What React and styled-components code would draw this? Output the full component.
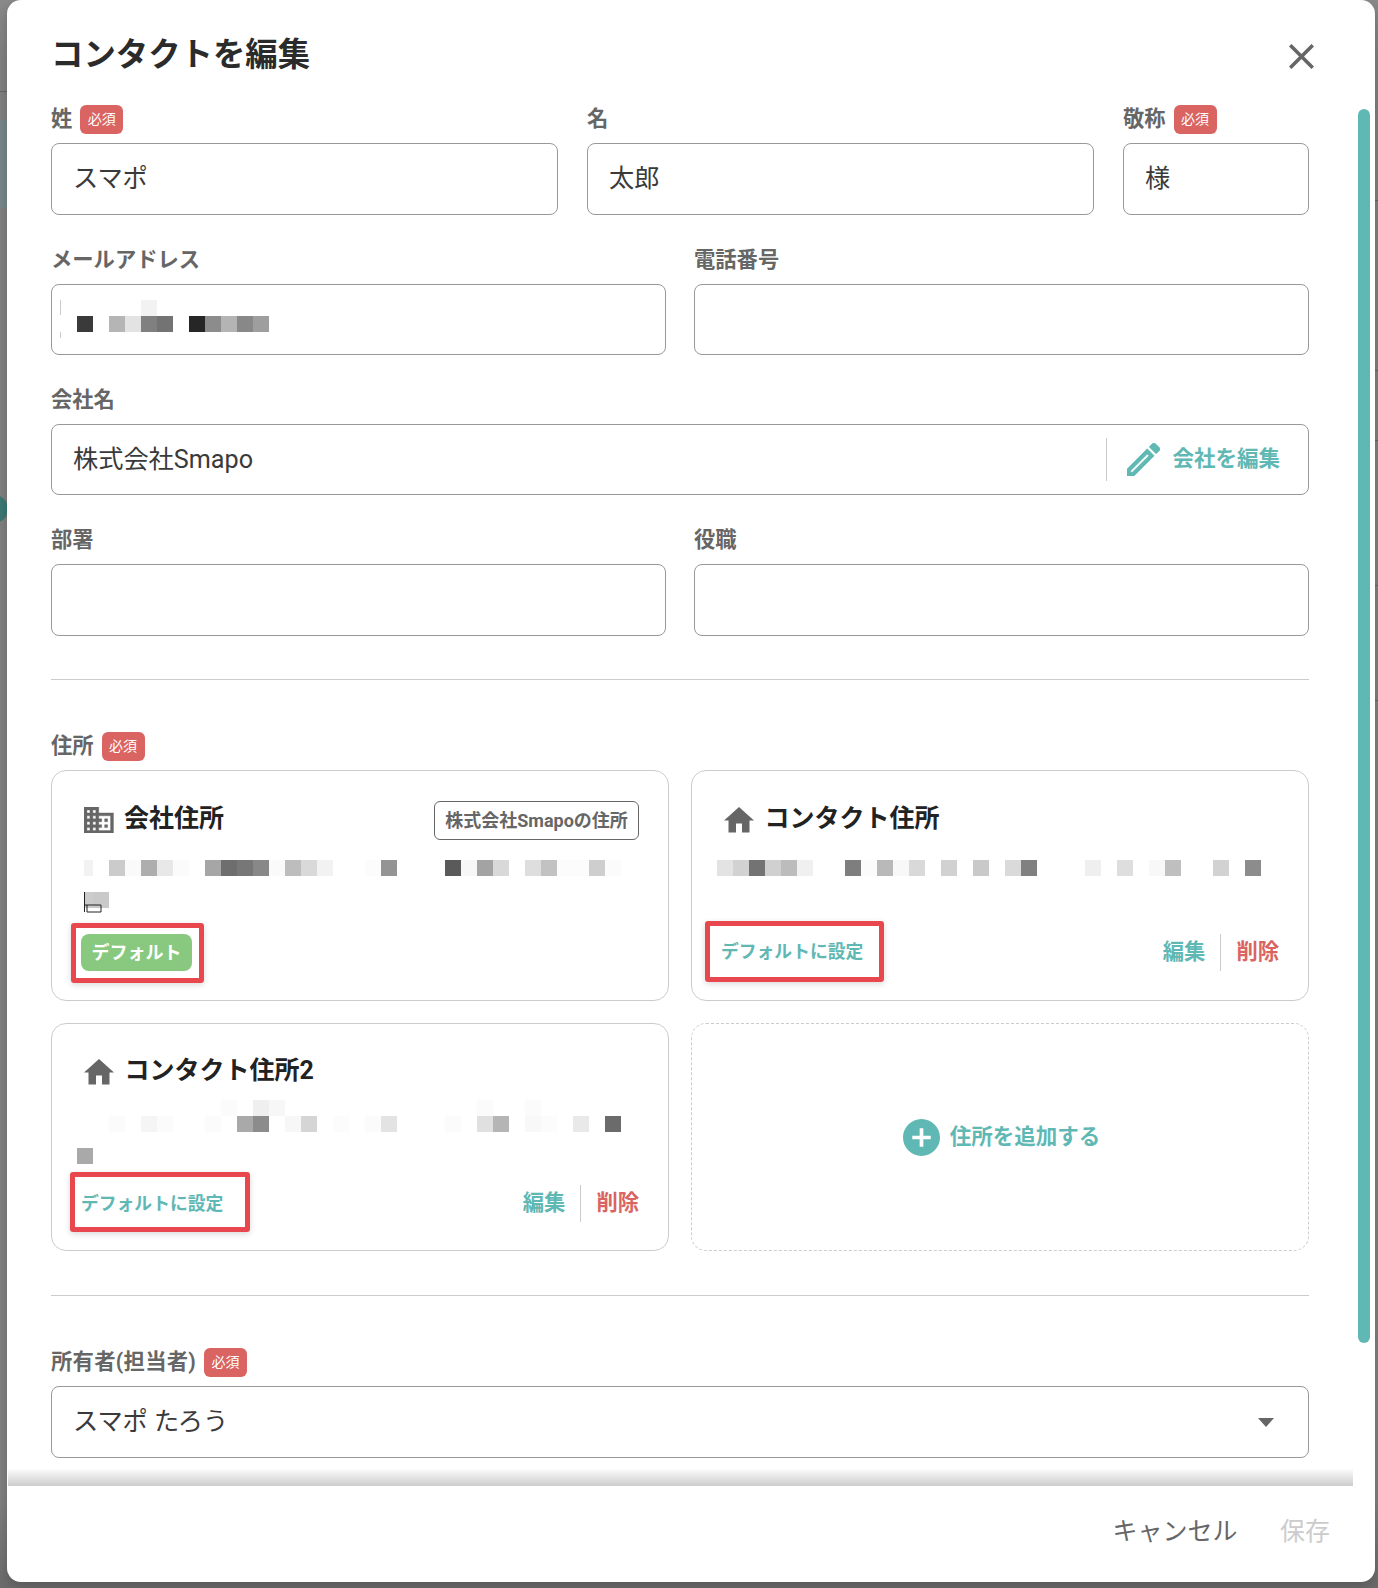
import styled, { createGlobalStyle } from "styled-components";

const teal = "#5fb8b4";
const red = "#d96461";

const GlobalStyle = createGlobalStyle`
    html, body {
        margin: 0;
        padding: 0;
        background: #808080;
    }
    * {
        box-sizing: border-box;
    }
    body {
        font-family: Roboto, "Noto Sans CJK JP", sans-serif;
    }
`;

const companyCells = [
    [0, 0, "#f2f2f2", 7, 9], [2, 0, "#cbcbcb"], [3, 0, "#fafafa"], [4, 0, "#aeaeae"], [5, 0, "#e8e8e8"], [6, 0, "#fbfbfb"],
    [8, 0, "#a6a6a6"], [9, 0, "#6e6e6e"], [10, 0, "#777777"], [11, 0, "#888888"], [12, 0, "#fafafa"], [13, 0, "#bdbdbd"],
    [14, 0, "#d9d9d9"], [15, 0, "#f2f2f2"], [18, 0, "#fcfcfc"], [19, 0, "#949494"], [23, 0, "#5a5a5a"], [24, 0, "#f7f7f7"],
    [25, 0, "#a3a3a3"], [26, 0, "#d9d9d9"], [28, 0, "#dedede"], [29, 0, "#c2c2c2"], [30, 0, "#fcfcfc"], [31, 0, "#fcfcfc"],
    [32, 0, "#cecece"], [33, 0, "#fbfbfb"],
    [0, 2, "#cccccc", 7, 9], [1, 2, "#c9c9c9"],
];

const contactCells = [
    [0, 0, "#e3e3e3"], [1, 0, "#d2d2d2"], [2, 0, "#737373"], [3, 0, "#d0d0d0"], [4, 0, "#bcbcbc"], [5, 0, "#f0f0f0"],
    [8, 0, "#7e7e7e"], [9, 0, "#fbfbfb"], [10, 0, "#b9b9b9"], [11, 0, "#f8f8f8"], [12, 0, "#d9d9d9"], [14, 0, "#d1d1d1"],
    [16, 0, "#c9c9c9"], [18, 0, "#dadada"], [19, 0, "#808080"], [23, 0, "#efefef"], [25, 0, "#dedede"], [27, 0, "#f8f8f8"],
    [28, 0, "#bfbfbf"], [31, 0, "#d2d2d2"], [33, 0, "#8c8c8c"],
];

const contact2Cells = [
    [9, 0, "#fbfbfb"], [11, 0, "#efefef"], [12, 0, "#f7f7f7"], [25, 0, "#fbfbfb"], [28, 0, "#fbfbfb"],
    [2, 1, "#fbfbfb"], [4, 1, "#f5f5f5"], [5, 1, "#fbfbfb"], [8, 1, "#fbfbfb"], [10, 1, "#a9a9a9"], [11, 1, "#8c8c8c"],
    [13, 1, "#f7f7f7"], [14, 1, "#d5d5d5"], [16, 1, "#fcfcfc"], [18, 1, "#fbfbfb"], [19, 1, "#e3e3e3"], [23, 1, "#fbfbfb"],
    [25, 1, "#e0e0e0"], [26, 1, "#b5b5b5"], [28, 1, "#f8f8f8"], [29, 1, "#fcfcfc"], [31, 1, "#e9e9e9"], [33, 1, "#6b6b6b"],
    [0, 3, "#a9a9a9"],
];

const emailCells = [
    [4, 0, "#f2f2f2"],
    [0, 1, "#3a3a3a"], [2, 1, "#b5b5b5"], [3, 1, "#e3e3e3"], [4, 1, "#808080"], [5, 1, "#737373"],
    [7, 1, "#262626"], [8, 1, "#8c8c8c"], [9, 1, "#b4b4b4"], [10, 1, "#888888"], [11, 1, "#9e9e9e"],
];

function Mosaic({ cells, rows, $mt, children }){
    return (
        <MosaicSvg $mt={$mt} width={34 * 16} height={rows * 16} viewBox={`0 0 ${34 * 16} ${rows * 16}`}>
            {cells.map(([col, row, fill, dx = 0, w = 16]) => (
                <rect key={`${col}-${row}`} x={col * 16 + dx} y={row * 16} width={w} height={16} fill={fill} />
            ))}
            {children}
        </MosaicSvg>
    );
}

function DomainIcon(){
    return (
        <CardIcon width="29.5" height="26.5" viewBox="2 3 20 18" fill="#666666" stroke="#666666" strokeWidth="0.25">
            <path d="M12 7V3H2v18h20V7H12zM6 19H4v-2h2v2zm0-4H4v-2h2v2zm0-4H4V9h2v2zm0-4H4V5h2v2zm4 12H8v-2h2v2zm0-4H8v-2h2v2zm0-4H8V9h2v2zm0-4H8V5h2v2zm10 12h-8v-2h2v-2h-2v-2h2v-2h-2V9h8v10zm-2-8h-2v2h2v-2zm0 4h-2v2h2v-2z" />
        </CardIcon>
    );
}

function HomeIcon(){
    return (
        <CardIcon width="30" height="25.5" viewBox="2 3 20 17" fill="#666666">
            <path d="M10 20v-6h4v6h5v-8h3L12 3 2 12h3v8z" />
        </CardIcon>
    );
}

function Required(){
    return <Badge>必須</Badge>;
}

function Actions(){
    return (
        <ActionGroup>
            <ActionLink $color={teal}>編集</ActionLink>
            <ActionDivider />
            <ActionLink $color={red}>削除</ActionLink>
        </ActionGroup>
    );
}

export default function App(){
    return (
        <>
            <GlobalStyle />
            <Backdrop>
                <BackdropLine $top={91} $side="left" />
                <BackdropPatch />
                <BackdropChip />
                <BackdropLine $top={200} $side="right" />
                <BackdropLine $top={370} $side="right" />
                <BackdropLine $top={440} $side="right" />
                <BackdropLine $top={585} $side="right" />
                <BackdropLine $top={700} $side="right" />
                <Modal>
                    <Header>
                        <Title>コンタクトを編集</Title>
                        <CloseButton width="25" height="25" viewBox="0 0 25 25">
                            <path d="M1.2 1.2 23.8 23.8M23.8 1.2 1.2 23.8" stroke="#666666" strokeWidth="3.6" fill="none" />
                        </CloseButton>
                    </Header>

                    <Body>
                        <FieldRows>
                            <NameRow>
                                <Field>
                                    <Label>姓<Required /></Label>
                                    <Box><Value>スマポ</Value></Box>
                                </Field>
                                <Field>
                                    <Label>名</Label>
                                    <Box><Value>太郎</Value></Box>
                                </Field>
                                <Field>
                                    <Label>敬称<Required /></Label>
                                    <Box><Value>様</Value></Box>
                                </Field>
                            </NameRow>
                            <TwoColumns>
                                <Field>
                                    <Label>メールアドレス</Label>
                                    <EmailBox>
                                        <EmailCursor />
                                        <Mosaic cells={emailCells} rows={2} />
                                    </EmailBox>
                                </Field>
                                <Field>
                                    <Label>電話番号</Label>
                                    <Box />
                                </Field>
                            </TwoColumns>
                            <Field>
                                <Label>会社名</Label>
                                <Box>
                                    <Value>株式会社Smapo</Value>
                                    <CompanyEdit>
                                        <svg width="33" height="33" viewBox="3 3 18 18" fill={teal} stroke={teal} strokeWidth="0.4">
                                            <path d="M14.06 9.02l.92.92L5.92 19H5v-.92l9.06-9.06M17.66 3c-.25 0-.51.1-.7.29l-1.83 1.83 3.75 3.75 1.83-1.83c.39-.39.39-1.02 0-1.41l-2.34-2.34c-.2-.2-.45-.29-.71-.29zm-3.6 3.19L3 17.25V21h3.75L17.81 9.94l-3.75-3.75z" />
                                        </svg>
                                        <span>会社を編集</span>
                                    </CompanyEdit>
                                </Box>
                            </Field>
                            <TwoColumns>
                                <Field>
                                    <Label>部署</Label>
                                    <Box />
                                </Field>
                                <Field>
                                    <Label>役職</Label>
                                    <Box />
                                </Field>
                            </TwoColumns>
                        </FieldRows>

                        <Divider $top={43.5} $bottom={52} />

                        <Label>住所<Required /></Label>
                        <CardGrid>
                            <Card>
                                <CardHead>
                                    <CardTitle><DomainIcon />会社住所</CardTitle>
                                    <CompanyTag>株式会社Smapoの住所</CompanyTag>
                                </CardHead>
                                <Mosaic cells={companyCells} rows={4} $mt={20}>
                                    <path d="M7.5 32V52M7.5 45H24M10 45V52H24V45" stroke="#222222" strokeWidth="1" fill="none" />
                                </Mosaic>
                                <CardFooter>
                                    <Highlight $inset="-11px -11.5px -12px -10.5px">
                                        <DefaultBadge>デフォルト</DefaultBadge>
                                    </Highlight>
                                </CardFooter>
                            </Card>
                            <Card>
                                <CardHead>
                                    <CardTitle><HomeIcon />コンタクト住所</CardTitle>
                                </CardHead>
                                <Mosaic cells={contactCells} rows={1} $mt={20} />
                                <CardFooter>
                                    <Highlight $inset="-13px -20.5px -11px -16px">
                                        <SetDefault>デフォルトに設定</SetDefault>
                                    </Highlight>
                                    <Actions />
                                </CardFooter>
                            </Card>
                            <Card $top={29} $bottom={27.6}>
                                <CardHead>
                                    <CardTitle><HomeIcon />コンタクト住所2</CardTitle>
                                </CardHead>
                                <Mosaic cells={contact2Cells} rows={4} $mt={8} />
                                <CardFooter>
                                    <Highlight $inset="-13px -26.5px -10px -11.5px">
                                        <SetDefault>デフォルトに設定</SetDefault>
                                    </Highlight>
                                    <Actions />
                                </CardFooter>
                            </Card>
                            <AddCard>
                                <svg width="37" height="37" viewBox="2 2 20 20" fill={teal}>
                                    <path d="M12 2C6.48 2 2 6.48 2 12s4.48 10 10 10 10-4.48 10-10S17.52 2 12 2zm5 11h-4v4h-2v-4H7v-2h4V7h2v4h4v2z" />
                                </svg>
                                <AddText>住所を追加する</AddText>
                            </AddCard>
                        </CardGrid>

                        <Divider $top={44.4} $bottom={52} />

                        <Field>
                            <Label $tracking={0.3}>所有者(担当者)<Required /></Label>
                            <Box>
                                <Value>スマポ たろう</Value>
                                <SelectArrow />
                            </Box>
                        </Field>
                    </Body>

                    <Fade />
                    <Footer>
                        <FooterButton $color="#666666">キャンセル</FooterButton>
                        <FooterButton $color="#cccccc">保存</FooterButton>
                    </Footer>

                    <ScrollThumb />
                </Modal>
            </Backdrop>
        </>
    );
}

const Backdrop = styled.div`
    position: relative;
    width: 1378px;
    height: 1588px;
    padding-left: 7px;
    overflow: hidden;
    background: linear-gradient(#8a8a8a 0, #808080 60px, #808080 1500px, #6b6b6b 1588px);
`;

const BackdropLine = styled.div`
    position: absolute;
    top: ${(p) => p.$top}px;
    ${(p) => (p.$side === "left" ? "left: 0;" : "right: 0;")}
    width: ${(p) => (p.$side === "left" ? 7 : 3)}px;
    height: 1px;
    background: #666666;
`;

const BackdropPatch = styled.div`
    position: absolute;
    top: 120px;
    left: 0;
    width: 7px;
    height: 88px;
    background: #76878a;
`;

const BackdropChip = styled.div`
    position: absolute;
    top: 495px;
    left: -20px;
    width: 28px;
    height: 28px;
    border-radius: 50%;
    background: #3c7775;
`;

const Modal = styled.div`
    position: relative;
    width: 1368px;
    height: 1582px;
    display: flex;
    flex-direction: column;
    overflow: hidden;
    background: #ffffff;
    border-radius: 14px;
    box-shadow: 0 4px 12px rgba(0, 0, 0, 0.2);
`;

const Header = styled.div`
    height: 105.2px;
    flex: none;
    display: flex;
    align-items: flex-start;
    justify-content: space-between;
    padding: 34px 61px 0 44px;
`;

const Title = styled.h1`
    margin: 0;
    font-size: 32.4px;
    line-height: 42px;
    font-weight: 700;
    color: #2b2b2b;
`;

const CloseButton = styled.svg`
    margin-top: 10px;
`;

const Body = styled.div`
    flex: 1;
    min-height: 0;
    overflow: hidden;
    padding: 0 66px 0 44px;
`;

const FieldRows = styled.div`
    display: flex;
    flex-direction: column;
    gap: 30.9px;
`;

const NameRow = styled.div`
    display: grid;
    grid-template-columns: 1fr 1fr 186px;
    gap: 29px;
`;

const TwoColumns = styled.div`
    display: grid;
    grid-template-columns: 1fr 1fr;
    gap: 28px;
`;

const Field = styled.div`
    display: flex;
    flex-direction: column;
    min-width: 0;
`;

const Label = styled.div`
    height: 29px;
    margin-bottom: 9px;
    display: flex;
    align-items: flex-start;
    gap: 8px;
    font-size: 21.3px;
    line-height: 27px;
    font-weight: 700;
    letter-spacing: ${(p) => p.$tracking ?? 0}px;
    color: #666666;
`;

const Badge = styled.span`
    width: 43px;
    height: 29px;
    display: inline-flex;
    align-items: center;
    justify-content: center;
    border-radius: 6px;
    background: ${red};
    color: #ffffff;
    font-size: 14px;
    font-weight: 400;
    letter-spacing: 0;
`;

const Box = styled.div`
    height: 71.5px;
    display: flex;
    align-items: center;
    padding: 0 21px;
    background: #ffffff;
    border: 1px solid #999999;
    border-radius: 8px;
`;

const EmailBox = styled(Box)`
    position: relative;
    padding: 15px 0 0 29px;
    align-items: flex-start;
`;

const EmailCursor = styled.div`
    position: absolute;
    left: 8px;
    top: 15px;
    width: 1px;
    height: 38px;
    background: linear-gradient(#cccccc 0 40%, transparent 40% 85%, #cccccc 85%);
`;

const Value = styled.span`
    flex: 1;
    padding-bottom: 6px;
    font-size: 25.2px;
    font-weight: 400;
    color: #3a3a3a;
`;

const CompanyEdit = styled.div`
    height: 43px;
    margin-right: 7px;
    padding-left: 20px;
    display: flex;
    align-items: center;
    gap: 12px;
    border-left: 1px solid #cccccc;
    color: ${teal};
    font-size: 21.5px;
    font-weight: 700;
    span {
        padding-bottom: 6px;
    }
`;

const SelectArrow = styled.div`
    width: 0;
    height: 0;
    margin-right: 13px;
    border-left: 8.5px solid transparent;
    border-right: 8.5px solid transparent;
    border-top: 9px solid #666666;
`;

const Divider = styled.div`
    height: 1px;
    margin: ${(p) => p.$top}px 0 ${(p) => p.$bottom}px;
    background: #cccccc;
`;

const CardGrid = styled.div`
    display: grid;
    grid-template-columns: 618px 618px;
    grid-template-rows: 231px 227.6px;
    gap: 22px;
`;

const Card = styled.div`
    display: flex;
    flex-direction: column;
    padding: ${(p) => p.$top ?? 30}px 29px ${(p) => p.$bottom ?? 29.5}px 29px;
    border: 1px solid #cccccc;
    border-radius: 15px;
`;

const CardHead = styled.div`
    height: 39px;
    flex: none;
    display: flex;
    align-items: center;
    justify-content: space-between;
`;

const CardTitle = styled.div`
    display: flex;
    align-items: center;
    gap: 10.5px;
    margin-left: 3px;
    padding-bottom: 9px;
    font-size: 25px;
    font-weight: 700;
    color: #222222;
`;

const CardIcon = styled.svg`
    flex: none;
    margin-top: 7px;
`;

const CompanyTag = styled.div`
    height: 39px;
    width: 205px;
    padding-bottom: 3px;
    display: flex;
    align-items: center;
    justify-content: center;
    border: 1px solid #666666;
    border-radius: 6px;
    font-size: 18px;
    font-weight: 700;
    color: #666666;
    white-space: nowrap;
`;

const MosaicSvg = styled.svg`
    display: block;
    flex: none;
    margin: ${(p) => p.$mt ?? 0}px 0 0 -4px;
`;

const CardFooter = styled.div`
    margin-top: auto;
    height: 37px;
    flex: none;
    display: flex;
    align-items: center;
    justify-content: space-between;
`;

const Highlight = styled.div`
    position: relative;
    &::after {
        content: "";
        position: absolute;
        inset: ${(p) => p.$inset};
        border: 5px solid #e8484d;
        border-radius: 3px;
        box-shadow: 0 2px 6px rgba(0, 0, 0, 0.15);
        pointer-events: none;
    }
`;

const DefaultBadge = styled.div`
    width: 111px;
    height: 37px;
    padding-bottom: 3px;
    display: flex;
    align-items: center;
    justify-content: center;
    border-radius: 8px;
    background: #88c97f;
    color: #ffffff;
    font-size: 18px;
    font-weight: 700;
`;

const SetDefault = styled.div`
    height: 37px;
    padding-bottom: 4px;
    display: flex;
    align-items: center;
    font-size: 17.8px;
    font-weight: 700;
    color: ${teal};
`;

const ActionGroup = styled.div`
    display: flex;
    align-items: center;
    gap: 15px;
`;

const ActionLink = styled.span`
    padding-bottom: 6px;
    font-size: 21.3px;
    font-weight: 700;
    color: ${(p) => p.$color};
`;

const ActionDivider = styled.div`
    width: 1px;
    height: 37px;
    background: #cccccc;
`;

const AddCard = styled.div`
    display: flex;
    align-items: center;
    justify-content: center;
    gap: 10px;
    padding-left: 3px;
    border: 1px dashed #cccccc;
    border-radius: 15px;
    color: ${teal};
    font-size: 21.5px;
    font-weight: 700;
`;

const AddText = styled.span`
    padding-bottom: 5px;
`;

const Fade = styled.div`
    width: 1345px;
    height: 18px;
    flex: none;
    margin-left: 1px;
    background: linear-gradient(#ffffff, #cccccc);
`;

const Footer = styled.div`
    height: 96px;
    flex: none;
    display: flex;
    align-items: center;
    justify-content: flex-end;
    gap: 42.5px;
    padding: 0 45px 10px 0;
`;

const FooterButton = styled.span`
    font-size: 25px;
    font-weight: 400;
    color: ${(p) => p.$color};
`;

const ScrollThumb = styled.div`
    position: absolute;
    top: 109px;
    right: 5px;
    width: 12px;
    height: 1234px;
    border-radius: 6px;
    background: ${teal};
`;
